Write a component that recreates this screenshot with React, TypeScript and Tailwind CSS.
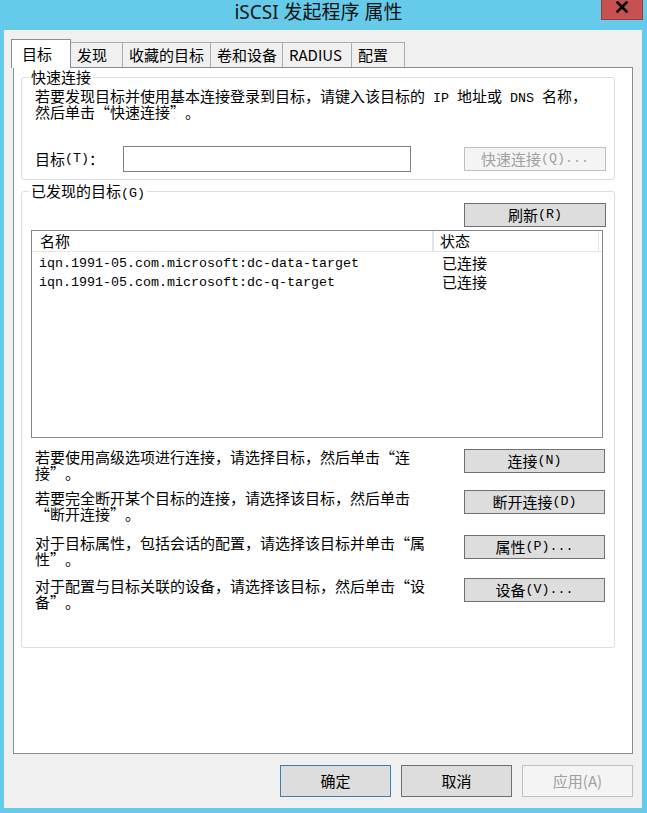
import React from "react";

function Mix({ s }: { s: string }) {
  const out: React.ReactNode[] = [];
  const re = /([\x20-\x7e]+)|(“)|(”)|([^\x20-\x7e“”]+)/g;
  let m: RegExpExecArray | null;
  let k = 0;
  while ((m = re.exec(s))) {
    if (m[1])
      out.push(
        <span key={k++} className="[font-family:'Liberation_Mono',monospace] text-[13.33px] whitespace-pre">
          {m[1]}
        </span>
      );
    else if (m[2])
      out.push(
        <span key={k++} className="inline-block w-[15px] text-right">
          “
        </span>
      );
    else if (m[3])
      out.push(
        <span key={k++} className="inline-block w-[15px] text-left">
          ”
        </span>
      );
    else out.push(<span key={k++}>{m[4]}</span>);
  }
  return <>{out}</>;
}

function Line({ s }: { s: string }) {
  return (
    <div className="h-[16px] leading-[16px] whitespace-nowrap">
      <Mix s={s} />
    </div>
  );
}

function Btn({ s, className, disabled }: { s: string; className: string; disabled?: boolean }) {
  return (
    <button
      type="button"
      className={`h-[24px] shrink-0 flex items-center justify-center border leading-[16px] whitespace-nowrap ${
        disabled ? "bg-[#f4f4f4] border-[#bfbfbf] text-[#a0a0a0]" : "bg-[#dddddd] border-[#707070] text-black"
      } ${className}`}
    >
      <Mix s={s} />
    </button>
  );
}

function Tab({ label, className }: { label: string; className: string }) {
  return (
    <div className={`h-[25px] border-t border-r border-[#acacac] bg-[#f0f0f0] pl-[6px] pt-[2px] whitespace-nowrap ${className}`}>
      {label}
    </div>
  );
}

function Row({ l1, l2, btn, className }: { l1: string; l2: string; btn: string; className: string }) {
  return (
    <div className={`flex items-start ${className}`}>
      <div className="ml-[13px]">
        <Line s={l1} />
        <Line s={l2} />
      </div>
      <Btn s={btn} className="ml-auto mr-[9px] w-[141px]" />
    </div>
  );
}

export default function App() {
  return (
    <div className="w-[647px] h-[813px] bg-[#66cbea] flex flex-col overflow-hidden text-black [font-family:'Noto_Sans_CJK_SC',sans-serif]">
      {/* Title bar */}
      <div className="relative h-[30px] shrink-0 flex justify-center pr-[10px]">
        <div className="text-[19px] leading-[24px] text-[#111111] [font-family:'Noto_Sans','Noto_Sans_CJK_SC',sans-serif]">
          iSCSI 发起程序 属性
        </div>
        <div className="absolute top-0 left-[601px] w-[42px] h-[20px] bg-[#c75050] border border-t-0 border-[#9b3c3c] flex justify-center">
          <svg width="14" height="12" viewBox="0 0 14 12" className="mt-[1px]">
            <path d="M2.5 1.5 L11.5 10.5 M11.5 1.5 L2.5 10.5" stroke="#000" strokeWidth="2.6" strokeLinecap="square" />
          </svg>
        </div>
      </div>

      {/* Client area */}
      <div className="ml-[4px] w-[638px] h-[778px] bg-[#f0f0f0] flex flex-col shrink-0">
        {/* Tabs */}
        <div className="mt-[9px] ml-[7px] h-[28px] flex items-end text-[15px] leading-[20px]">
          <div className="relative z-10 w-[60px] h-[29px] -mb-[1px] bg-white border border-b-0 border-[#898c95] pl-[10px] pt-[4px]">
            目标
          </div>
          <Tab label="发现" className="w-[52px]" />
          <Tab label="收藏的目标" className="w-[88px]" />
          <Tab label="卷和设备" className="w-[72px]" />
          <Tab label="RADIUS" className="w-[69px]" />
          <Tab label="配置" className="w-[53px]" />
        </div>

        {/* Tab page */}
        <div className="ml-[9px] w-[620px] h-[687px] shrink-0 bg-white border border-[#898c95] flex flex-col text-[15px] leading-[16px]">
          {/* Quick connect group */}
          <div className="mt-[9px] ml-[7px] w-[594px] h-[103px] shrink-0 border border-[#d5dfe5] rounded-[3px] flex flex-col">
            <div className="self-start -mt-[9px] ml-[7px] px-[2px] bg-white h-[16px]">快速连接</div>
            <div className="mt-[3px] ml-[13px]">
              <Line s="若要发现目标并使用基本连接登录到目标，请键入该目标的 IP 地址或 DNS 名称，" />
              <Line s="然后单击“快速连接”。" />
            </div>
            <div className="mt-[26px] flex items-start">
              <div className="ml-[13px] w-[88px] h-[26px] flex items-center whitespace-nowrap">
                <Mix s="目标(T)：" />
              </div>
              <div className="w-[288px] h-[26px] border border-[#7f7f7f] bg-white" />
              <Btn s="快速连接(Q)..." className="ml-[53px] mt-[1px] w-[142px]" disabled />
            </div>
          </div>

          {/* Discovered targets group */}
          <div className="mt-[11px] ml-[7px] w-[594px] h-[457px] shrink-0 border border-[#d5dfe5] rounded-[3px] flex flex-col">
            <div className="self-start -mt-[9px] ml-[7px] px-[2px] bg-white h-[16px] whitespace-nowrap">
              <Mix s="已发现的目标(G)" />
            </div>
            <Btn s="刷新(R)" className="mt-[4px] ml-[442px] w-[142px]" />

            {/* List view */}
            <div className="mt-[3px] ml-[9px] w-[572px] h-[208px] shrink-0 border border-[#828790] bg-white flex flex-col">
              <div className="h-[21px] flex border-b border-[#e5e5e5] leading-[20px]">
                <div className="w-[402px] border-r-2 border-[#e5e5e5] pl-[8px]">名称</div>
                <div className="w-[165px] border-r border-[#e5e5e5] pl-[6px]">状态</div>
              </div>
              <div className="mt-[1px] h-[19px] flex items-center">
                <div className="w-[404px] pl-[7px] whitespace-nowrap">
                  <Mix s="iqn.1991-05.com.microsoft:dc-data-target" />
                </div>
                <div className="pl-[6px]">已连接</div>
              </div>
              <div className="h-[19px] flex items-center">
                <div className="w-[404px] pl-[7px] whitespace-nowrap">
                  <Mix s="iqn.1991-05.com.microsoft:dc-q-target" />
                </div>
                <div className="pl-[6px]">已连接</div>
              </div>
            </div>

            <Row
              className="mt-[11px]"
              l1="若要使用高级选项进行连接，请选择目标，然后单击“连"
              l2="接”。"
              btn="连接(N)"
            />
            <Row
              className="mt-[9px]"
              l1="若要完全断开某个目标的连接，请选择该目标，然后单击"
              l2="“断开连接”。"
              btn="断开连接(D)"
            />
            <Row
              className="mt-[13px]"
              l1="对于目标属性，包括会话的配置，请选择该目标并单击“属"
              l2="性”。"
              btn="属性(P)..."
            />
            <Row
              className="mt-[11px]"
              l1="对于配置与目标关联的设备，请选择该目标，然后单击“设"
              l2="备”。"
              btn="设备(V)..."
            />
          </div>
        </div>

        {/* Dialog buttons */}
        <div className="mt-[11px] flex justify-end gap-[10px] pr-[9px] text-[15px] leading-[20px]">
          <button type="button" className="w-[111px] h-[32px] bg-[#dddddd] border border-[#3c7fb1] text-black">
            确定
          </button>
          <button type="button" className="w-[111px] h-[32px] bg-[#dddddd] border border-[#707070] text-black">
            取消
          </button>
          <button type="button" className="w-[111px] h-[32px] bg-[#f4f4f4] border border-[#bfbfbf] text-[#a0a0a0]">
            应用(A)
          </button>
        </div>
      </div>
    </div>
  );
}
